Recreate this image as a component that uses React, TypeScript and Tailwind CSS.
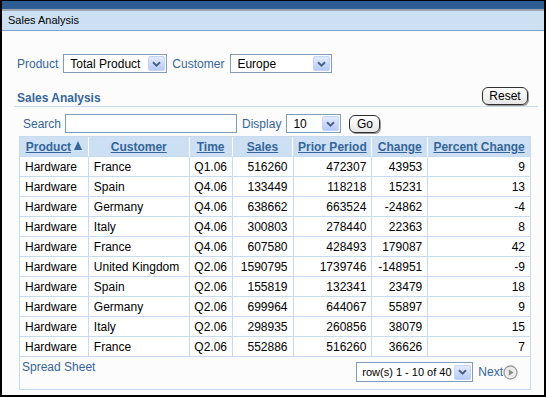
import React from "react";

const rows: [string, string, string, string, string, string, string][] = [
  ["Hardware", "France", "Q1.06", "516260", "472307", "43953", "9"],
  ["Hardware", "Spain", "Q4.06", "133449", "118218", "15231", "13"],
  ["Hardware", "Germany", "Q4.06", "638662", "663524", "-24862", "-4"],
  ["Hardware", "Italy", "Q4.06", "300803", "278440", "22363", "8"],
  ["Hardware", "France", "Q4.06", "607580", "428493", "179087", "42"],
  ["Hardware", "United Kingdom", "Q2.06", "1590795", "1739746", "-148951", "-9"],
  ["Hardware", "Spain", "Q2.06", "155819", "132341", "23479", "18"],
  ["Hardware", "Germany", "Q2.06", "699964", "644067", "55897", "9"],
  ["Hardware", "Italy", "Q2.06", "298935", "260856", "38079", "15"],
  ["Hardware", "France", "Q2.06", "552886", "516260", "36626", "7"],
];

function Arrow() {
  return (
    <span className="flex h-[15px] w-[17px] shrink-0 items-center justify-center rounded-[2px] border border-[#c3d3fd] bg-gradient-to-b from-[#e3ebfe] to-[#b7caf6]">
      <svg width="9" height="6" viewBox="0 0 9 6">
        <path d="M1 1.2 L4.5 4.6 L8 1.2" fill="none" stroke="#4d6185" strokeWidth="2" />
      </svg>
    </span>
  );
}

function Select({ value, width, height = "h-[19px]", pl = "pl-[6px]", small = false }: { value: string; width: string; height?: string; pl?: string; small?: boolean }) {
  return (
    <div className={`flex ${width} ${height} items-center justify-between border border-[#7f9db9] bg-white ${pl} pr-[1px] ${small ? "text-[11px]" : "text-[12px]"} text-black`}>
      <span className="whitespace-nowrap">{value}</span>
      <Arrow />
    </div>
  );
}

function Btn({ label, width }: { label: string; width: string }) {
  return (
    <div className={`flex h-[18px] ${width} items-center justify-center rounded-[6px] border border-[#2e2e2e] bg-gradient-to-b from-white to-[#e6e6e6] text-[12px] text-black shadow-[1px_1px_0_#9a9a9a]`}>
      {label}
    </div>
  );
}

const colW = ["w-[69px]", "w-[101px]", "w-[43px]", "w-[61px]", "w-[79px]", "w-[56px]", "w-[102px]"];
const heads = ["Product", "Customer", "Time", "Sales", "Prior Period", "Change", "Percent Change"];
const align = ["justify-start", "justify-start", "justify-center", "justify-end", "justify-end", "justify-end", "justify-end"];

export default function App() {
  return (
    <div className="flex h-[397px] w-[546px] flex-col border-x-2 border-t border-b-2 border-black bg-[#fbfcfb] font-['Liberation_Sans',Arial,sans-serif]">
      <div className="h-[8px] bg-[#2d5d92]" />
      <div className="h-[2px] bg-[#9aa6b4]" />
      <div className="flex h-[20px] items-center border-b border-[#7fa2cb] bg-[#cde0f3] pl-[6px] text-[11px] text-black">
        Sales Analysis
      </div>
      <div className="flex flex-1 flex-col">
        <div className="ml-[15px] mt-[23px] flex h-[19px] items-center text-[12px] text-[#35659a]">
          <span>Product</span>
          <div className="ml-[5px]">
            <Select value="Total Product" width="w-[104px]" />
          </div>
          <span className="ml-[5px]">Customer</span>
          <div className="ml-[6px]">
            <Select value="Europe" width="w-[102px]" />
          </div>
        </div>
        <div className="ml-[12px] mt-[14px] flex h-[20px] w-[524px] items-start justify-between border-b border-[#c9dcef] pl-[3px] pr-[10px]">
          <span className="mt-[2px] text-[12px] font-bold text-[#35659a]">Sales Analysis</span>
          <Btn label="Reset" width="w-[46px]" />
        </div>
        <div className="ml-[21px] mt-[7px] flex h-[19px] items-center text-[12px] text-[#35659a]">
          <span>Search</span>
          <div className="ml-[4px] h-[19px] w-[172px] border border-[#7f9db9] bg-white" />
          <span className="ml-[5px]">Display</span>
          <div className="ml-[5px]">
            <Select value="10" width="w-[55px]" />
          </div>
          <div className="ml-[8px]">
            <Btn label="Go" width="w-[31px]" />
          </div>
        </div>
        <div className="ml-[17px] mt-[3px] w-[512px] border-x border-b border-[#c6daf0]">
          <div className="flex border-t border-[#c6daf0] bg-[#cde0f3]">
            {heads.map((h, i) => (
              <div
                key={h}
                className={`flex h-[20px] ${colW[i]} items-center justify-center border-b border-b-[#c6daf0] ${i < 6 ? "border-r border-r-white" : ""} text-[12px] font-bold text-[#35659a]`}
              >
                <span className="underline">{h}</span>
                {i === 0 && (
                  <svg className="ml-[3px] mb-[3px]" width="8" height="9" viewBox="0 0 8 9">
                    <path d="M4 0 L8 9 L0 9 Z" fill="#35659a" />
                  </svg>
                )}
              </div>
            ))}
          </div>
          {rows.map((r, ri) => (
            <div key={ri} className="flex bg-white">
              {r.map((c, i) => (
                <div
                  key={i}
                  className={`flex h-[20px] ${colW[i]} items-center ${align[i]} border-b border-[#c6daf0] ${i < 6 ? "border-r" : ""} px-[5px] text-[12px] text-black whitespace-nowrap`}
                >
                  {c}
                </div>
              ))}
            </div>
          ))}
          <div className="flex h-[32px] items-start justify-between pl-[2px] pr-[12px]">
            <span className="mt-[1px] text-[12px] text-[#35659a]">Spread Sheet</span>
            <div className="mt-[5px] flex items-center">
              <Select value="row(s) 1 - 10 of 40" width="w-[117px]" height="h-[20px]" pl="pl-[5px]" small />
              <span className="ml-[5px] text-[12px] text-[#35659a]">Next</span>
              <svg width="15" height="15" viewBox="0 0 15 15">
                <circle cx="7.5" cy="7.5" r="6.5" fill="#ededed" stroke="#9c9c9c" strokeWidth="1.3" />
                <path d="M5.8 4.2 L10.6 7.5 L5.8 10.8 Z" fill="#8e8e8e" />
              </svg>
            </div>
          </div>
        </div>
      </div>
    </div>
  );
}
